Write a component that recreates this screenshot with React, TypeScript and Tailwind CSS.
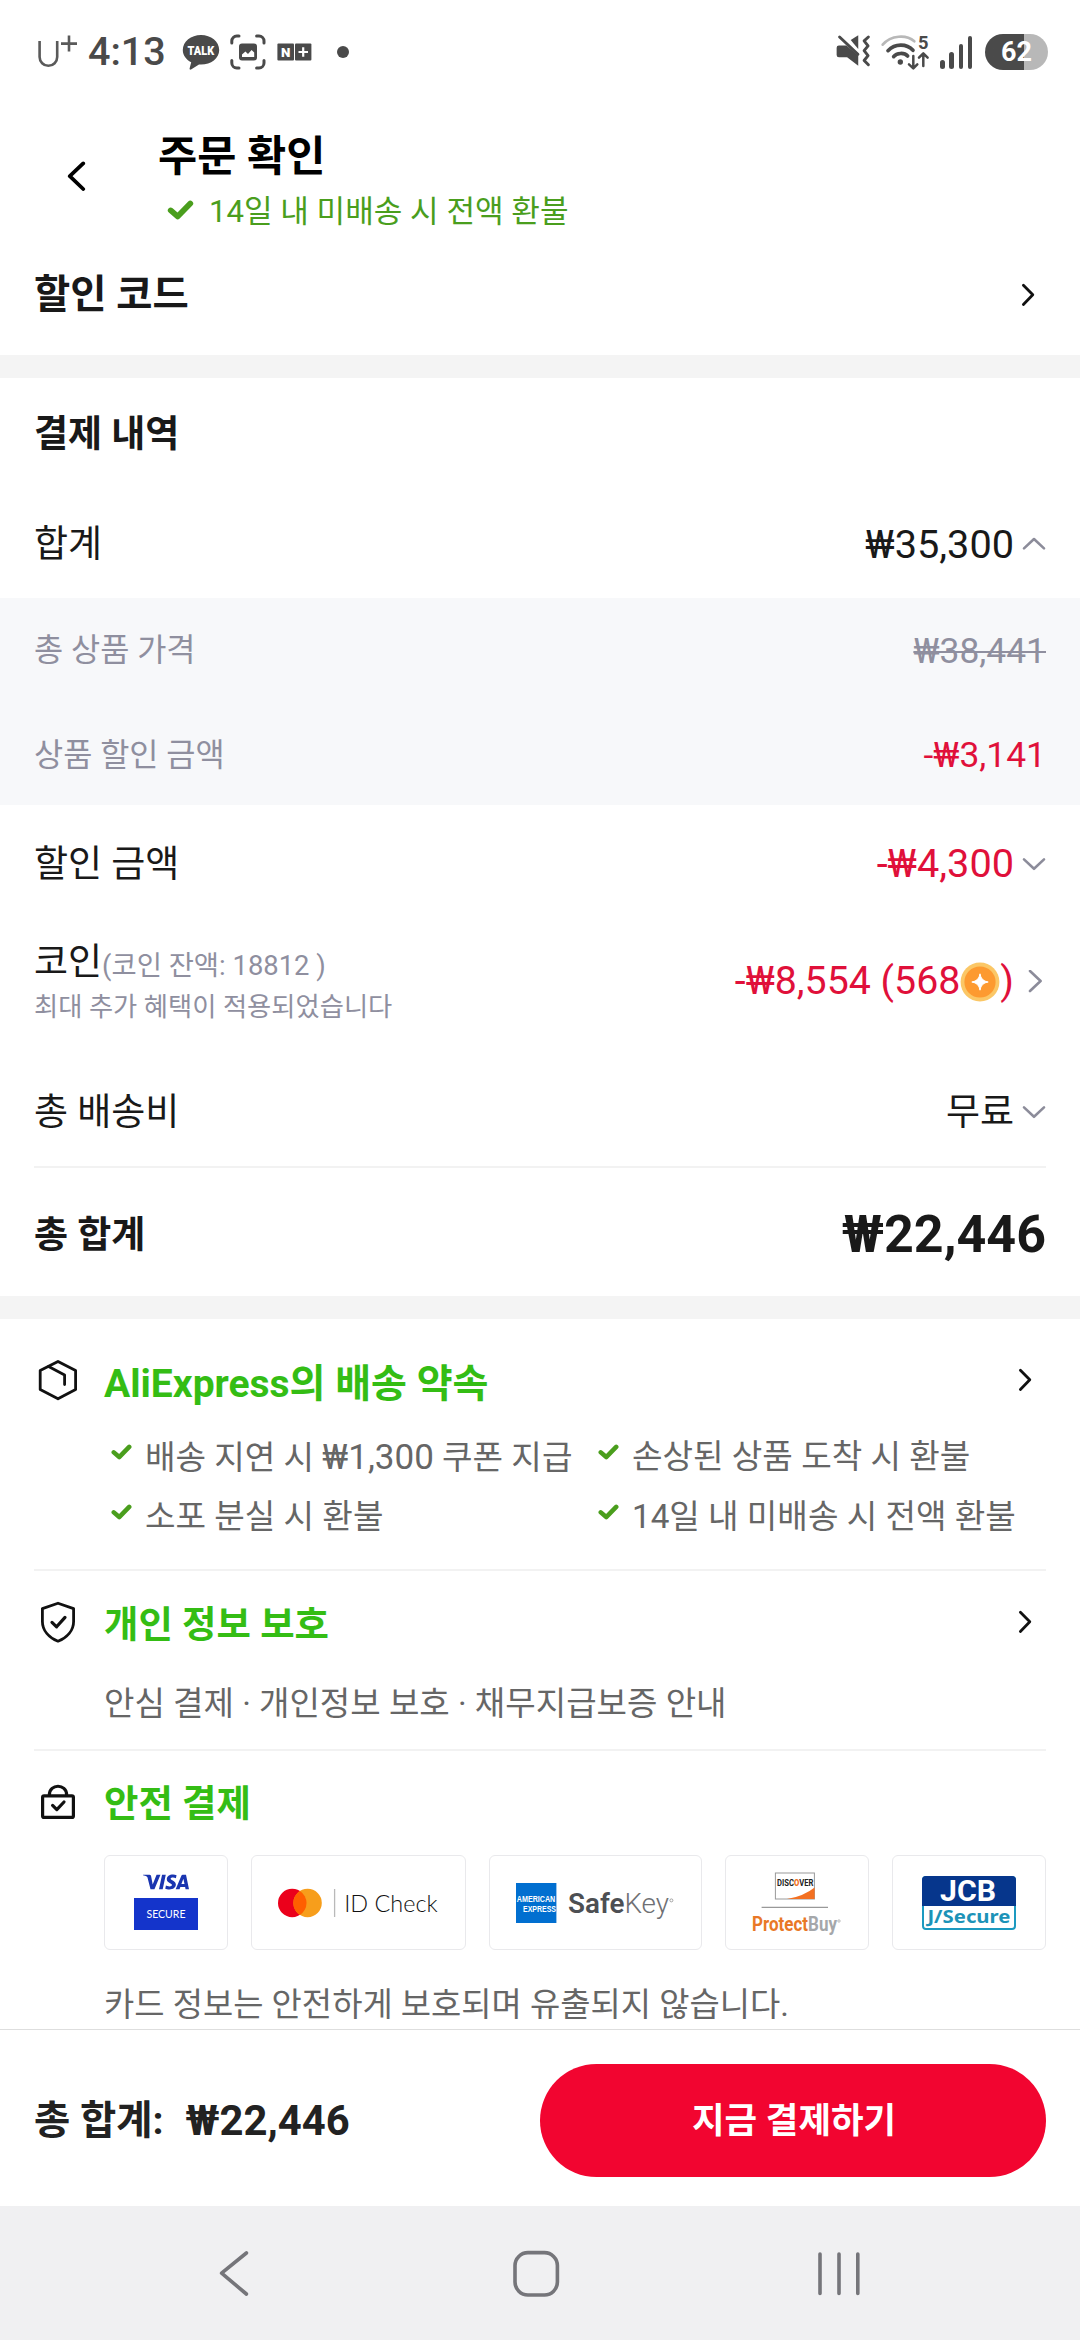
import type { ReactNode } from "react";
import { SiVisa } from "react-icons/si";

/* ---------- shared icons ---------- */

function Check({ className }: { className: string }) {
  return (
    <svg viewBox="0 0 24 18" className={className} fill="none">
      <path d="M3.2 9.4 L9.4 14.8 L20.8 3.2" stroke="#4a9e1d" strokeWidth="5.2" strokeLinecap="round" strokeLinejoin="round" />
    </svg>
  );
}

function ArrowRight() {
  return (
    <svg viewBox="0 0 14 24" className="w-3.5 h-6" fill="none">
      <path d="M2.4 2.2 L11.8 11.8 L2.4 21.4" stroke="#111" strokeWidth="2.8" strokeLinecap="round" strokeLinejoin="round" />
    </svg>
  );
}

const carets = {
  up: "M2 16.4 L12 7 L22 16.4",
  down: "M2 7.4 L12 16.8 L22 7.4",
  right: "M8 1 L18.6 11 L8 21",
};

function Caret({ dir }: { dir: keyof typeof carets }) {
  return (
    <svg viewBox="0 0 24 24" className="w-6 h-6" fill="none">
      <path d={carets[dir]} stroke="#8c8c9a" strokeWidth="2.6" strokeLinecap="round" strokeLinejoin="round" />
    </svg>
  );
}

/* ---------- status bar ---------- */

function StatusBar() {
  return (
    <div className="h-[103px] shrink-0 flex items-center justify-between pl-[36px] pr-[32px] text-[#4a4a4a]">
      <div className="flex items-center">
        <svg viewBox="0 0 42 36" className="w-[42px] h-9" fill="none" stroke="#5a5a5a" strokeWidth="2.6">
          <path d="M3.6 7 V23 a8.8 8.8 0 0 0 17.6 0 V7" />
          <path d="M25 9.6 H41 M33 1.6 V17.6" />
        </svg>
        <span className="ml-[10px] w-[78px] text-[39.5px] leading-9 font-medium">4:13</span>
        {/* talk bubble */}
        <svg viewBox="0 0 38 36" className="ml-4 w-[38px] h-9 overflow-visible">
          <path d="M19 1 C29 1 37.2 7.6 37.2 16 C37.2 24.4 29 30.6 19 30.6 L17 30.5 L9 35.6 C8 36 7.4 35.4 7.6 34.6 L9.2 28.2 C4 25.6 .8 21.2 .8 16 C.8 7.6 9 1 19 1z" fill="#4a4a4a" />
          <text x="5.6" y="21" textLength="26.6" lengthAdjust="spacingAndGlyphs" fontSize="13.6" fontWeight="900" fill="#fff">TALK</text>
        </svg>
        {/* screen capture */}
        <svg viewBox="0 0 36 36" className="ml-[10px] w-9 h-9" fill="none">
          <path d="M1.8 9 V7 a5 5 0 0 1 5-5 H9 M26.6 2 H29 a5 5 0 0 1 5 5 V9 M34 26.6 V29 a5 5 0 0 1-5 5 H26.6 M9 34 H6.8 a5 5 0 0 1-5-5 V26.6" stroke="#4a4a4a" strokeWidth="3" strokeLinecap="round" />
          <rect x="9" y="9.4" width="18" height="17" rx="3" fill="#4a4a4a" />
          <path d="M12 23 V20.5 L15.4 17.4 L18 20 L21.6 16 L24.2 18.6 V23z" fill="#fff" />
        </svg>
        {/* N+ */}
        <svg viewBox="0 0 35 18" className="ml-[11px] w-[35px] h-[18px]">
          <rect x=".4" y=".4" width="16.6" height="17" rx="1" fill="#4a4a4a" />
          <rect x="18" y=".4" width="16.4" height="17" rx="1" fill="#4a4a4a" />
          <text x="4" y="13.6" textLength="9.4" lengthAdjust="spacingAndGlyphs" fontSize="13" fontWeight="900" fill="#fff">N</text>
          <path d="M21.5 9 H31 M26.2 4.2 V13.8" stroke="#fff" strokeWidth="2.2" />
        </svg>
        <span className="ml-[25px] size-3 rounded-full bg-[#4a4a4a]" />
      </div>

      <div className="flex items-center">
        {/* sound off, vibrate */}
        <svg viewBox="0 0 110 105" className="w-[36px] h-[34.4px]" fill="#4a4a4a">
          <path d="M5 42 q0-7 7-7 h23 L71 66 V97 L37 71 H12 q-7 0-7-7z" />
          <path d="M48 18 L71 4 V46z" />
          <path d="M14 9 L70 62" stroke="#4a4a4a" strokeWidth="9" strokeLinecap="round" />
          <path d="M102 9 L89 21 L101 36 L89 51 L101 66 L89 81 L102 94" fill="none" stroke="#4a4a4a" strokeWidth="9" strokeLinecap="round" strokeLinejoin="round" />
        </svg>
        {/* wifi */}
        <svg viewBox="0 0 145 108" className="ml-[10px] w-[48.3px] h-9 overflow-visible" fill="none" strokeLinecap="round" strokeLinejoin="round">
          <path d="M5 32 C30 3 76 1 100 22" stroke="#b8b8b8" strokeWidth="8" />
          <path d="M21 50 C42 28 77 28 96 49" stroke="#4a4a4a" strokeWidth="11" />
          <path d="M38 68 C47 56 70 55 80 66" stroke="#4a4a4a" strokeWidth="11" />
          <circle cx="58" cy="84" r="8" fill="#4a4a4a" />
          <path d="M97 66 V102 M84 91 L97 103 L109 91 M127 96 V60 M114 71 L127 58 L140 71" stroke="#4a4a4a" strokeWidth="7.5" />
          <text x="111" y="45" fontSize="55" fontWeight="700" fill="#4a4a4a">5</text>
        </svg>
        {/* signal */}
        <div className="ml-[11.5px] flex items-end gap-[4.7px] h-[34px]">
          <span className="w-[4.4px] h-[9px] rounded-full bg-[#4a4a4a]" />
          <span className="w-[4.4px] h-[17px] rounded-full bg-[#4a4a4a]" />
          <span className="w-[4.4px] h-[25px] rounded-full bg-[#4a4a4a]" />
          <span className="w-[4.4px] h-[33px] rounded-full bg-[#4a4a4a]" />
        </div>
        {/* battery */}
        <div className="ml-[13px] w-[63px] h-9 rounded-full bg-linear-to-r from-[#4a4a4a] from-[62%] to-[#b8b8b8] to-[62%] text-white text-[27px] leading-9 font-bold text-center">
          62
        </div>
      </div>
    </div>
  );
}

/* ---------- payment details ---------- */

function SumRow({ label, children, className }: { label: string; children: ReactNode; className: string }) {
  return (
    <div className={`flex items-center justify-between px-[34px] ${className}`}>
      <span className="text-[37px]">{label}</span>
      <div className="flex items-center gap-2">{children}</div>
    </div>
  );
}

function Coin() {
  return (
    <svg viewBox="0 0 40 40" className="w-10 h-10">
      <circle cx="20" cy="20" r="19.4" fill="#fbc766" />
      <circle cx="20" cy="20" r="15.6" fill="#fd9a30" />
      <path d="M20 11.8 Q21 19 28.2 20 Q21 21 20 28.2 Q19 21 11.8 20 Q19 19 20 11.8z" fill="#fff" stroke="#fff" strokeWidth="1" />
    </svg>
  );
}

/* ---------- guarantees ---------- */

function BoxIcon() {
  return (
    <svg viewBox="0 0 48 48" className="w-12 h-12" fill="none" stroke="#111" strokeWidth="2.8" strokeLinejoin="round" strokeLinecap="round">
      <path d="M24 5.4 L41.6 14.6 V33.4 L24 42.8 L6.2 33.4 V14.6z" />
      <path d="M14.6 10.4 L30.6 19 V28.6" />
    </svg>
  );
}

function ShieldIcon() {
  return (
    <svg viewBox="0 0 48 48" className="w-12 h-12" fill="none" stroke="#111" strokeWidth="2.8" strokeLinejoin="round" strokeLinecap="round">
      <path d="M24 5.2 L39.6 10.6 V23.4 C39.6 32.4 33 39.4 24 43.2 C15 39.4 8.4 32.4 8.4 23.4 V10.6z" />
      <path d="M18 24.4 L22.6 28.8 L31 19.4" strokeWidth="3.2" />
    </svg>
  );
}

function LockIcon() {
  return (
    <svg viewBox="0 0 48 48" className="w-12 h-12" fill="none" stroke="#111" strokeWidth="3.2" strokeLinejoin="round" strokeLinecap="round">
      <rect x="8.6" y="18.8" width="30.8" height="21.6" rx="1.5" />
      <path d="M15.4 17.8 C15.4 6.4 32.6 6.4 32.6 17.8" />
      <path d="M18.6 28.4 L22.8 32.6 L30 25" />
    </svg>
  );
}

function SectionHead({ icon, title, arrow, className }: { icon: ReactNode; title: ReactNode; arrow?: boolean; className: string }) {
  return (
    <div className={`flex items-center ${className}`}>
      <span className="relative -top-1">{icon}</span>
      <h3 className="ml-[22px] flex-1 font-bold text-[#34bd14]">{title}</h3>
      {arrow && (
        <span className="relative -top-1 mr-[14px]">
          <ArrowRight />
        </span>
      )}
    </div>
  );
}

function Promise({ children }: { children: ReactNode }) {
  return (
    <li className="flex items-center h-[60px] pl-[7px] whitespace-nowrap">
      <Check className="relative -top-[5px] w-[21px] h-4" />
      <span className="ml-[13px]">{children}</span>
    </li>
  );
}

function Card({ className, children }: { className: string; children: ReactNode }) {
  return (
    <div className={`h-[95px] rounded-md border-[1.5px] border-[#e9e9ec] flex items-center justify-center ${className}`}>
      {children}
    </div>
  );
}

function CardLogos() {
  return (
    <div className="ml-[70px] flex justify-between">
      <Card className="w-[124px] flex-col">
        <SiVisa className="-mt-4 w-[46px] h-[46px] text-[#1a35b0]" />
        <span className="-mt-[7px] w-16 h-8 bg-[#1434cb] flex items-center justify-center text-white text-[10.5px] font-[Lato,sans-serif]">
          SECURE
        </span>
      </Card>

      <Card className="w-[215px] pr-px">
        <svg viewBox="0 0 162 34" className="w-[162px] h-[34px]">
          <circle cx="15.2" cy="17" r="14.2" fill="#eb001b" />
          <circle cx="30.6" cy="17" r="14.2" fill="#f79e1b" />
          <path d="M22.9 5 a14.2 14.2 0 0 1 0 24 a14.2 14.2 0 0 1 0-24z" fill="#ff5f00" />
          <path d="M57.6 3 V31" stroke="#b9b9b9" strokeWidth="1.3" />
          <text x="67.2" y="25.6" textLength="93.4" lengthAdjust="spacingAndGlyphs" className="font-[Lato,sans-serif] font-light" fontSize="23.5" fill="#111">ID Check</text>
        </svg>
      </Card>

      <Card className="w-[213px]">
        <svg viewBox="0 0 160 42" className="w-[160px] h-[42px]">
          <rect x="0" y="1" width="40.4" height="40" fill="#016fd0" />
          <g className="font-['Liberation_Sans',sans-serif] font-bold" fill="#fff">
            <text x=".8" y="20.4" fontSize="9" textLength="38.4" lengthAdjust="spacingAndGlyphs">AMERICAN</text>
            <text x="7" y="30" fontSize="9" textLength="33" lengthAdjust="spacingAndGlyphs">EXPRESS</text>
          </g>
          <text x="52" y="31" fontSize="28" textLength="101" lengthAdjust="spacingAndGlyphs" fontWeight="600" fill="#4d4f53">
            Safe<tspan fontWeight="300" fill="#6f7074">Key</tspan>
          </text>
          <circle cx="155.4" cy="18.4" r="1.5" fill="none" stroke="#999" strokeWidth=".9" />
        </svg>
      </Card>

      <Card className="w-[144px]">
        <svg viewBox="0 0 90 68" className="w-[90px] h-[68px]">
          <rect x="23.4" y="4" width="39" height="26" fill="#fff" stroke="#999" />
          <path d="M35 30 Q52 27 62.6 18.4 V30z" fill="#f37021" />
          <text x="25" y="17.2" fontSize="8.8" fontWeight="700" textLength="36.4" lengthAdjust="spacingAndGlyphs" fill="#222">
            DISC<tspan fontWeight="900" fill="#f37021">O</tspan>VER
          </text>
          <path d="M9.6 38.4 H76" stroke="#999" strokeWidth="1.2" />
          <text x="0" y="61.6" fontSize="19.6" fontWeight="700" textLength="85" lengthAdjust="spacingAndGlyphs" fill="#e97826">
            Protect<tspan fill="#a5a7aa">Buy</tspan>
          </text>
          <circle cx="87" cy="52" r="1.2" fill="none" stroke="#aaa" strokeWidth=".8" />
        </svg>
      </Card>

      <Card className="w-[154px]">
        <svg viewBox="0 0 94 54" className="w-[94px] h-[54px] overflow-visible">
          <rect x="1" y="1" width="92" height="52" rx="3" fill="#fff" stroke="#1c9ac0" strokeWidth="2" />
          <path d="M0 30 V4 a4 4 0 0 1 4-4 H90 a4 4 0 0 1 4 4 V30z" fill="#06368c" />
          <text x="18" y="25.4" fontSize="29" fontWeight="700" textLength="56" lengthAdjust="spacingAndGlyphs" fill="#fff">JCB</text>
          <text x="5.4" y="47" fontSize="18" fontWeight="700" textLength="83" lengthAdjust="spacingAndGlyphs" className="font-['Noto_Sans',sans-serif]" fill="#1c93b8">J/Secure</text>
        </svg>
      </Card>
    </div>
  );
}

/* ---------- page ---------- */

export default function App() {
  return (
    <div className="w-[1080px] h-[2340px] overflow-hidden flex flex-col bg-white text-[#191919] leading-none font-[Roboto,'Noto_Sans_CJK_KR',sans-serif]">
      <StatusBar />

      {/* Header */}
      <header className="h-[146px] shrink-0 flex items-start pt-[26px]">
        <svg viewBox="0 0 20 30" className="mt-8 ml-[66px] w-5 h-[30px]" fill="none">
          <path d="M17.2 2.4 L3.8 15.2 L17.2 28" stroke="#000" strokeWidth="3.8" strokeLinecap="round" strokeLinejoin="round" />
        </svg>
        <div className="ml-[72px]">
          <h1 className="h-14 leading-[55px] text-[42.6px] font-bold text-black">주문 확인</h1>
          <div className="flex items-center h-[54px] pl-[9px] text-[31.1px] text-[#4a9e1d]">
            <Check className="relative -top-[2px] w-[27px] h-5" />
            <span className="ml-[15px]">14일 내 미배송 시 전액 환불</span>
          </div>
        </div>
      </header>

      <div className="h-[106px] shrink-0 flex items-center justify-between pl-[34px] pr-[45px] pb-[15px]">
        <h2 className="text-[39.4px] font-bold">할인 코드</h2>
        <ArrowRight />
      </div>

      <div className="h-[23px] shrink-0 bg-[#f4f4f4]" />

      {/* Payment details */}
      <section>
        <h2 className="h-[113px] leading-[114px] px-[34px] text-[37px] font-bold">결제 내역</h2>

        <SumRow label="합계" className="h-[107px]">
          <span className="text-[39.7px]">₩35,300</span>
          <Caret dir="up" />
        </SumRow>

        <div className="h-[207px] px-[34px] bg-[#f7f8fa] text-[31.7px] text-[#8f8f9f]">
          <div className="flex items-center justify-between h-[105px]">
            <span>총 상품 가격</span>
            <span className="pt-[2px] text-[35.4px] line-through decoration-2">₩38,441</span>
          </div>
          <div className="flex items-center justify-between h-[105px]">
            <span>상품 할인 금액</span>
            <span className="text-[35.4px] text-[#e0103a]">-₩3,141</span>
          </div>
        </div>

        <SumRow label="할인 금액" className="h-[118px]">
          <span className="text-[39.7px] text-[#e0103a]">-₩4,300</span>
          <Caret dir="down" />
        </SumRow>

        <div className="h-[117px] flex items-center justify-between px-[34px] pt-px">
          <div>
            <div className="h-[50px] leading-[50px] text-[37px]">
              코인<span className="text-[27.4px] text-[#8f8f9f]">(코인 잔액: 18812 )</span>
            </div>
            <div className="h-[38px] leading-[38px] text-[26.3px] text-[#8f8f9f]">최대 추가 혜택이 적용되었습니다</div>
          </div>
          <div className="flex items-center text-[39.3px] text-[#e0103a]">
            <span>-₩8,554 (568</span>
            <Coin />
            <span className="mr-2">)</span>
            <Caret dir="right" />
          </div>
        </div>

        <SumRow label="총 배송비" className="h-[126px] pt-[18px]">
          <span className="text-[37px]">무료</span>
          <Caret dir="down" />
        </SumRow>
        <div className="mx-[34px] h-0.5 bg-[#f2f2f2]" />

        <div className="flex items-center justify-between h-[128px] px-[34px] pt-[6px] font-bold">
          <span className="text-[37px]">총 합계</span>
          <span className="text-[52px]">₩22,446</span>
        </div>
      </section>

      <div className="h-[23px] shrink-0 bg-[#f4f4f4]" />

      {/* Guarantees */}
      <section className="px-[34px] text-[33.2px] text-[#666]">
        <div className="pb-[22px] border-b-2 border-[#f2f2f2]">
          <SectionHead className="h-[108px] pt-[22px] text-[39px]" icon={<BoxIcon />} title="AliExpress의 배송 약속" arrow />
          <ul className="ml-[70px] grid grid-cols-[487px_1fr]">
            <Promise>
              배송 지연 시 <span className="text-[35px]">₩1,300</span> 쿠폰 지급
            </Promise>
            <Promise>손상된 상품 도착 시 환불</Promise>
            <Promise>소포 분실 시 환불</Promise>
            <Promise>14일 내 미배송 시 전액 환불</Promise>
          </ul>
        </div>

        <div className="pb-[15px] border-b-2 border-[#f2f2f2]">
          <SectionHead className="h-[103px] pt-[6px] text-[37.4px]" icon={<ShieldIcon />} title="개인 정보 보호" arrow />
          <p className="ml-[70px] h-[60px] leading-[60px] text-[33.1px]">안심 결제 · 개인정보 보호 · 채무지급보증 안내</p>
        </div>

        <SectionHead className="h-[104px] pt-1 text-[37.4px]" icon={<LockIcon />} title="안전 결제" />
        <CardLogos />
        <p className="ml-[70px] mt-[31px] h-12 leading-[48px] text-[32.9px]">카드 정보는 안전하게 보호되며 유출되지 않습니다.</p>
      </section>

      {/* Checkout bar */}
      <div className="h-[177px] shrink-0 flex items-center justify-between pl-[34px] pr-[34px] pt-[8px] border-t border-[#dedede] pb-[3px]">
        <div className="flex items-center gap-[22px] pt-px font-bold text-[#222]">
          <span className="text-[39.4px]">총 합계:</span>
          <span className="text-[41.8px]">₩22,446</span>
        </div>
        <button className="w-[506px] h-[113px] pt-[3px] pl-[2px] rounded-full bg-[#f20530] text-white text-[35.4px] font-bold">지금 결제하기</button>
      </div>

      {/* Navigation bar */}
      <nav className="h-[135px] shrink-0 bg-[#f0f0f2]">
        <svg viewBox="0 0 1080 135" className="w-full h-full" fill="none" stroke="#75757a" strokeWidth="3.6" strokeLinecap="round" strokeLinejoin="round">
          <path d="M246.4 47 L221.6 67.2 L246.4 88" />
          <rect x="515" y="46.6" width="42.4" height="42.4" rx="13" />
          <path d="M820 48 V87.4 M839 48 V87.4 M857.8 48 V87.4" />
        </svg>
      </nav>
    </div>
  );
}
